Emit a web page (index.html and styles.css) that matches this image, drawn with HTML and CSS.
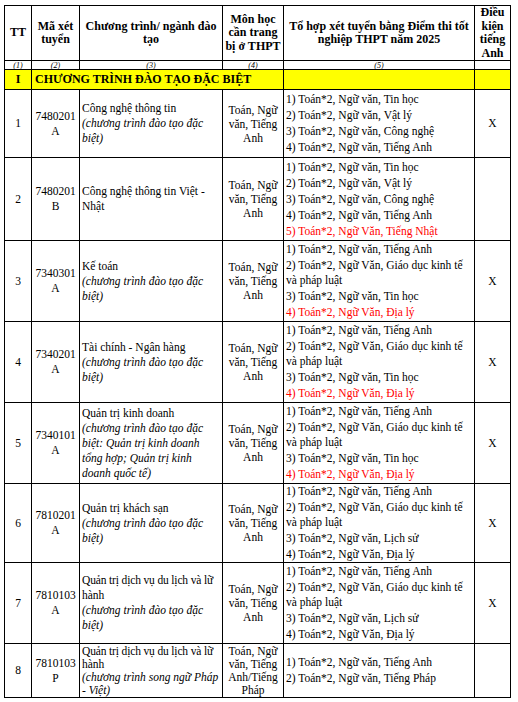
FILE: index.html
```html
<!DOCTYPE html>
<html lang="vi">
<head>
<meta charset="utf-8">
<title>Tổ hợp xét tuyển</title>
<link rel="stylesheet" href="styles.css">
</head>
<body>
<table class="tbl">
  <colgroup>
    <col class="c1"><col class="c2"><col class="c3"><col class="c4"><col class="c5"><col class="c6">
  </colgroup>
  <thead>
    <tr class="r-head">
      <th>TT</th>
      <th>Mã xét tuyển</th>
      <th>Chương trình/ ngành đào tạo</th>
      <th>Môn học cần trang bị ở THPT</th>
      <th>Tổ hợp xét tuyển bằng Điểm thi tốt nghiệp THPT năm 2025</th>
      <th>Điều kiện tiếng Anh</th>
    </tr>
    <tr class="r-num">
      <td>(1)</td><td>(2)</td><td>(3)</td><td>(4)</td><td>(5)</td><td></td>
    </tr>
  </thead>
  <tbody>
    <tr class="r-sec">
      <td class="center">I</td>
      <td colspan="3" class="sec-title">CHƯƠNG TRÌNH ĐÀO TẠO ĐẶC BIỆT</td>
      <td></td><td></td>
    </tr>
    <tr class="r-68">
      <td class="center">1</td>
      <td class="center">7480201<br>A</td>
      <td class="prog">Công nghệ thông tin<br><i>(chương trình đào tạo đặc biệt)</i></td>
      <td class="subj">Toán, Ngữ văn, Tiếng Anh</td>
      <td class="combo"><p>1) Toán*2, Ngữ văn, Tin học</p><p>2) Toán*2, Ngữ văn, Vật lý</p><p>3) Toán*2, Ngữ văn, Công nghệ</p><p>4) Toán*2, Ngữ văn, Tiếng Anh</p></td>
      <td class="center">X</td>
    </tr>
    <tr class="r-83">
      <td class="center">2</td>
      <td class="center">7480201<br>B</td>
      <td class="prog">Công nghệ thông tin Việt - Nhật</td>
      <td class="subj">Toán, Ngữ văn, Tiếng Anh</td>
      <td class="combo"><p>1) Toán*2, Ngữ văn, Tin học</p><p>2) Toán*2, Ngữ văn, Vật lý</p><p>3) Toán*2, Ngữ văn, Công nghệ</p><p>4) Toán*2, Ngữ văn, Tiếng Anh</p><p class="red">5) Toán*2, Ngữ Văn, Tiếng Nhật</p></td>
      <td></td>
    </tr>
    <tr class="r-81">
      <td class="center">3</td>
      <td class="center">7340301<br>A</td>
      <td class="prog">Kế toán<br><i>(chương trình đào tạo đặc biệt)</i></td>
      <td class="subj">Toán, Ngữ văn, Tiếng Anh</td>
      <td class="combo"><p>1) Toán*2, Ngữ văn, Tiếng Anh</p><p>2) Toán*2, Ngữ Văn, Giáo dục kinh tế và pháp luật</p><p>3) Toán*2, Ngữ văn, Tin học</p><p class="red">4) Toán*2, Ngữ Văn, Địa lý</p></td>
      <td class="center">X</td>
    </tr>
    <tr class="r-81">
      <td class="center">4</td>
      <td class="center">7340201<br>A</td>
      <td class="prog">Tài chính - Ngân hàng<br><i>(chương trình đào tạo đặc biệt)</i></td>
      <td class="subj">Toán, Ngữ văn, Tiếng Anh</td>
      <td class="combo"><p>1) Toán*2, Ngữ văn, Tiếng Anh</p><p>2) Toán*2, Ngữ Văn, Giáo dục kinh tế và pháp luật</p><p>3) Toán*2, Ngữ văn, Tin học</p><p class="red">4) Toán*2, Ngữ Văn, Địa lý</p></td>
      <td class="center">X</td>
    </tr>
    <tr class="r-81">
      <td class="center">5</td>
      <td class="center">7340101<br>A</td>
      <td class="prog">Quản trị kinh doanh<br><i>(chương trình đào tạo đặc biệt: Quản trị kinh doanh tổng hợp; Quản trị kinh doanh quốc tế)</i></td>
      <td class="subj">Toán, Ngữ văn, Tiếng Anh</td>
      <td class="combo"><p>1) Toán*2, Ngữ văn, Tiếng Anh</p><p>2) Toán*2, Ngữ Văn, Giáo dục kinh tế và pháp luật</p><p>3) Toán*2, Ngữ văn, Tin học</p><p class="red">4) Toán*2, Ngữ Văn, Địa lý</p></td>
      <td class="center">X</td>
    </tr>
    <tr class="r-79">
      <td class="center">6</td>
      <td class="center">7810201<br>A</td>
      <td class="prog">Quản trị khách sạn<br><i>(chương trình đào tạo đặc biệt)</i></td>
      <td class="subj">Toán, Ngữ văn, Tiếng Anh</td>
      <td class="combo"><p>1) Toán*2, Ngữ văn, Tiếng Anh</p><p>2) Toán*2, Ngữ Văn, Giáo dục kinh tế và pháp luật</p><p>3) Toán*2, Ngữ văn, Lịch sử</p><p>4) Toán*2, Ngữ Văn, Địa lý</p></td>
      <td class="center">X</td>
    </tr>
    <tr class="r-81">
      <td class="center">7</td>
      <td class="center">7810103<br>A</td>
      <td class="prog"><span class="nw">Quản trị dịch vụ du lịch và lữ</span> hành<br><i>(chương trình đào tạo đặc biệt)</i></td>
      <td class="subj">Toán, Ngữ văn, Tiếng Anh</td>
      <td class="combo"><p>1) Toán*2, Ngữ văn, Tiếng Anh</p><p>2) Toán*2, Ngữ Văn, Giáo dục kinh tế và pháp luật</p><p>3) Toán*2, Ngữ văn, Lịch sử</p><p>4) Toán*2, Ngữ Văn, Địa lý</p></td>
      <td class="center">X</td>
    </tr>
    <tr class="r-54 tight">
      <td class="center">8</td>
      <td class="center">7810103<br>P</td>
      <td class="prog"><span class="nw">Quản trị dịch vụ du lịch và lữ</span> hành<br><i>(chương trình song ngữ Pháp - Việt)</i></td>
      <td class="subj">Toán, Ngữ văn, Tiếng Anh/Tiếng Pháp</td>
      <td class="combo"><p>1) Toán*2, Ngữ văn, Tiếng Anh</p><p>2) Toán*2, Ngữ văn, Tiếng Pháp</p></td>
      <td></td>
    </tr>
  </tbody>
</table>
</body>
</html>
```

FILE: styles.css
```css
html, body {
  margin: 0;
  padding: 0;
  background: #ffffff;
}
body {
  padding: 5px 0 0 4px;
  font-family: "Liberation Serif", "Times New Roman", serif;
  font-size: 11.5px;
  color: #000000;
}
.tbl {
  border-collapse: collapse;
  table-layout: fixed;
  width: 507px;
}
.c1 { width: 27px; }
.c2 { width: 48px; }
.c3 { width: 143px; }
.c4 { width: 61px; }
.c5 { width: 191px; }
.c6 { width: 36px; }
.tbl th, .tbl td {
  border: 1px solid #000000;
  padding: 0 2px;
  vertical-align: middle;
  overflow: hidden;
  line-height: 15px;
}
.tbl th {
  font-weight: bold;
  text-align: center;
  line-height: 13.5px;
  font-size: 12px;
}
.tbl .r-num td {
  font-size: 8px;
  line-height: 7px;
  height: 7px;
  font-style: italic;
  text-align: center;
  padding: 0;
}
.r-head { height: 55px; }
.r-num { height: 9px; }
.r-sec { height: 20px; }
.tbl .r-sec td {
  background: #ffff00;
  font-weight: bold;
  font-size: 12px;
  line-height: 15px;
}
.tbl .sec-title { padding-left: 3px; }
.r-68 { height: 68px; }
.r-83 { height: 83px; }
.r-81 { height: 81px; }
.r-79 { height: 79px; }
.r-54 { height: 54px; }
.center { text-align: center; }
.tbl .prog { text-align: left; padding-right: 0; }
.nw { white-space: nowrap; letter-spacing: -0.15px; }
.tbl .subj { text-align: center; line-height: 14px; }
.combo p {
  margin: 0;
  line-height: 15px;
}
.combo p + p { margin-top: 1px; }
.tbl .tight .prog, .tbl .tight .subj { line-height: 13px; }
.red { color: #ff0000; }
```
